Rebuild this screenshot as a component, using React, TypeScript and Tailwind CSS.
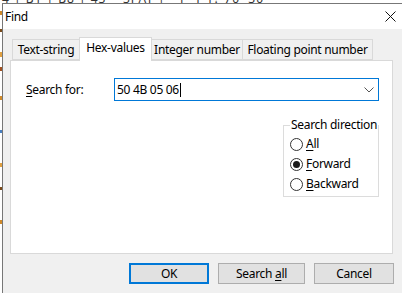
import React from "react";

const font = { fontFamily: '"Noto Sans", "Liberation Sans", sans-serif', letterSpacing: "-0.3px" };

function Radio({ checked, u, rest }: { checked?: boolean; u: string; rest: string }) {
  return (
    <div className="flex items-center h-[20px]">
      <div className="w-[13px] h-[13px] rounded-full border border-[#333333] bg-white flex items-center justify-center shrink-0">
        {checked && <div className="w-[7px] h-[7px] rounded-full bg-[#1a1a1a]" />}
      </div>
      <span className="ml-[3px] leading-none whitespace-nowrap">
        <span className="underline underline-offset-2">{u}</span>
        {rest}
      </span>
    </div>
  );
}

export default function App() {
  return (
    <div className="w-[402px] h-[293px] overflow-hidden bg-white flex flex-col text-[12px] text-black" style={font}>
      {/* background app fragments */}
      <div className="h-[3px] overflow-hidden bg-white shrink-0">
        <div className="-mt-[10px] ml-[2px] whitespace-nowrap text-[12px] text-[#333] tracking-[1px]">
          4 | B1 | B8 | 43 &nbsp;&nbsp; 3PAT | &nbsp; 1 &nbsp;1 1? 70 &nbsp;30
        </div>
      </div>
      <div className="flex flex-1 min-h-0">
        <div className="w-[2px] bg-white flex flex-col shrink-0">
          <div className="h-[8px]" />
          <div className="h-[4px] bg-[#d08a2a]" />
          <div className="h-[14px]" />
          <div className="h-[3px] bg-[#7a4a1a]" />
          <div className="h-[20px]" />
          <div className="h-[5px] bg-[#e0a040]" />
          <div className="h-[10px]" />
          <div className="h-[4px] bg-[#a05020]" />
          <div className="h-[25px]" />
          <div className="h-[4px] bg-[#d08a2a]" />
          <div className="h-[30px]" />
          <div className="h-[3px] bg-[#4a80c0]" />
          <div className="h-[30px]" />
          <div className="h-[4px] bg-[#e0a040]" />
          <div className="h-[20px]" />
          <div className="h-[3px] bg-[#7a4a1a]" />
          <div className="h-[30px]" />
          <div className="h-[4px] bg-[#d08a2a]" />
        </div>
        <div className="flex-1 flex flex-col border-l border-t border-[#777777] min-w-0">
          {/* Title bar */}
          <div className="h-[25px] bg-white flex items-center justify-between shrink-0">
            <span className="ml-[2px] text-[12px] leading-none">Find</span>
            <svg width="11" height="11" viewBox="0 0 11 11" className="mr-[6px]">
              <path d="M0.5 0.5 L10.5 10.5 M10.5 0.5 L0.5 10.5" stroke="#111" strokeWidth="1" />
            </svg>
          </div>
          {/* Client area */}
          <div className="flex-1 bg-[#f0f0f0] flex flex-col pl-[7px] pr-[9px]">
            {/* Tabs */}
            <div className="flex items-end h-[31px] pl-[2px] shrink-0">
              <div className="h-[21px] w-[67px] border border-[#d9d9d9] border-r-0 bg-[#f0f0f0] flex items-center justify-center">
                <span className="leading-none">Text-string</span>
              </div>
              <div className="h-[24px] w-[73px] border border-[#d9d9d9] border-b-0 bg-white flex items-start justify-center -mb-px relative z-10 pt-[4px]">
                <span className="leading-none">Hex-values</span>
              </div>
              <div className="h-[21px] w-[91px] border border-[#d9d9d9] border-l-0 bg-[#f0f0f0] flex items-center justify-center">
                <span className="leading-none">Integer number</span>
              </div>
              <div className="h-[21px] w-[130px] border border-[#d9d9d9] border-l-0 bg-[#f0f0f0] flex items-center justify-center">
                <span className="leading-none">Floating point number</span>
              </div>
            </div>
            {/* Panel */}
            <div className="h-[194px] bg-white border border-[#d9d9d9] flex flex-col shrink-0">
              <div className="flex items-center mt-[17px] ml-[15px]">
                <span className="w-[88px] leading-none">
                  <span className="underline underline-offset-2">S</span>earch for:
                </span>
                <div className="w-[265px] h-[23px] border border-[#0078d7] bg-white flex items-center justify-between pl-[2px] pr-[4px]">
                  <span className="leading-none flex items-center">
                    50 4B 05 06<span className="inline-block w-px h-[14px] bg-black ml-px" />
                  </span>
                  <svg width="10" height="6" viewBox="0 0 10 6">
                    <path d="M0.5 0.5 L5 5 L9.5 0.5" stroke="#555" strokeWidth="1" fill="none" />
                  </svg>
                </div>
              </div>
              <div className="flex justify-end mr-[13px] mt-[24px]">
                <div className="w-[96px] h-[72px] border border-[#dcdcdc] relative pl-[6px] pt-[8px]">
                  <span className="absolute -top-[8px] left-[6px] bg-white px-[1px] leading-[14px] whitespace-nowrap">
                    Search direction
                  </span>
                  <Radio u="A" rest="ll" />
                  <Radio checked u="F" rest="orward" />
                  <Radio u="B" rest="ackward" />
                </div>
              </div>
            </div>
            {/* Buttons */}
            <div className="flex justify-end items-start mt-[9px] gap-[9px] -mr-[1px]">
              <div className="w-[80px] h-[21px] border-2 border-[#0078d7] bg-[#e1e1e1] flex items-center justify-center">
                <span className="leading-none">OK</span>
              </div>
              <div className="w-[87px] h-[21px] border border-[#adadad] bg-[#e1e1e1] flex items-center justify-center">
                <span className="leading-none">
                  Search <span className="underline underline-offset-2">a</span>ll
                </span>
              </div>
              <div className="w-[80px] h-[21px] border border-[#adadad] bg-[#e1e1e1] flex items-center justify-center">
                <span className="leading-none">Cancel</span>
              </div>
            </div>
          </div>
        </div>
      </div>
    </div>
  );
}
